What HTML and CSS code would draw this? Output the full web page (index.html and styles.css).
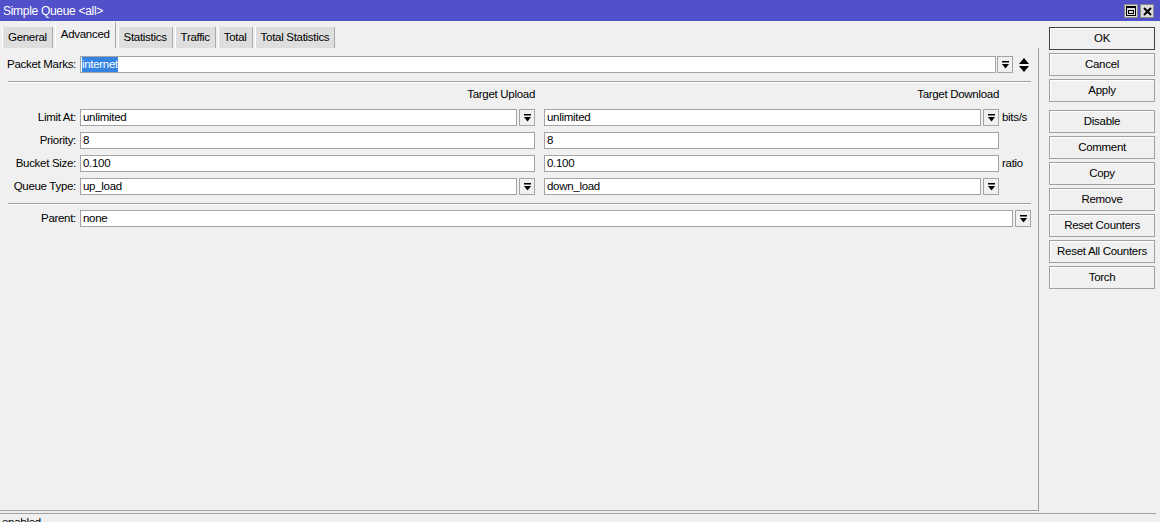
FILE: index.html
```html
<!DOCTYPE html>
<html lang="en">
<head>
    <meta charset="UTF-8">
    <title>Simple Queue &lt;all&gt;</title>
    <link rel="stylesheet" href="styles.css">
</head>
<body>
    <div class="titlebar">
        <span class="title">Simple Queue &lt;all&gt;</span>
        <div class="winbtns">
            <span class="wbtn">
                <svg width="10" height="10" viewBox="0 0 10 10"><rect x=".5" y=".5" width="9" height="9" fill="none" stroke="#000"/><rect x="0" y="0" width="10" height="2"/><rect x="2.5" y="4.5" width="5" height="3" fill="none" stroke="#000"/></svg>
            </span>
            <span class="wbtn">
                <svg width="9" height="9" viewBox="0 0 9 9"><path d="M1 1L8 8M8 1L1 8" stroke="#000" stroke-width="2"/></svg>
            </span>
        </div>
    </div>

    <div class="window">
        <div class="main">
            <div class="tabs">
                <div class="tab">General</div>
                <div class="tab active">Advanced</div>
                <div class="tab">Statistics</div>
                <div class="tab">Traffic</div>
                <div class="tab">Total</div>
                <div class="tab">Total Statistics</div>
            </div>

            <div class="panel">
                <div class="row">
                    <div class="lbl">Packet Marks:</div>
                    <div class="field marks"><span class="selected">internet</span></div>
                    <div class="dd"><svg width="7" height="8" viewBox="0 0 7 8"><rect width="7" height="1.5"/><path d="M0 3h7L3.5 7.5z"/></svg></div>
                    <div class="updown"><svg width="10" height="14" viewBox="0 0 10 14"><path d="M5 0L10 6H0z M0 8h10L5 14z"/></svg></div>
                </div>

                <div class="sep"></div>

                <div class="grid">
                    <div></div>
                    <div class="head">Target Upload</div>
                    <div class="head">Target Download</div>
                    <div></div>

                    <div class="lbl">Limit At:</div>
                    <div class="combo">
                        <div class="field">unlimited</div>
                        <div class="dd"><svg width="7" height="8" viewBox="0 0 7 8"><rect width="7" height="1.5"/><path d="M0 3h7L3.5 7.5z"/></svg></div>
                    </div>
                    <div class="combo">
                        <div class="field">unlimited</div>
                        <div class="dd"><svg width="7" height="8" viewBox="0 0 7 8"><rect width="7" height="1.5"/><path d="M0 3h7L3.5 7.5z"/></svg></div>
                    </div>
                    <div class="unit">bits/s</div>

                    <div class="lbl">Priority:</div>
                    <div class="combo"><div class="field">8</div></div>
                    <div class="combo"><div class="field">8</div></div>
                    <div></div>

                    <div class="lbl">Bucket Size:</div>
                    <div class="combo"><div class="field">0.100</div></div>
                    <div class="combo"><div class="field">0.100</div></div>
                    <div class="unit">ratio</div>

                    <div class="lbl">Queue Type:</div>
                    <div class="combo">
                        <div class="field">up_load</div>
                        <div class="dd"><svg width="7" height="8" viewBox="0 0 7 8"><rect width="7" height="1.5"/><path d="M0 3h7L3.5 7.5z"/></svg></div>
                    </div>
                    <div class="combo">
                        <div class="field">down_load</div>
                        <div class="dd"><svg width="7" height="8" viewBox="0 0 7 8"><rect width="7" height="1.5"/><path d="M0 3h7L3.5 7.5z"/></svg></div>
                    </div>
                    <div></div>
                </div>

                <div class="sep sep2"></div>

                <div class="row parent">
                    <div class="lbl">Parent:</div>
                    <div class="combo wide">
                        <div class="field">none</div>
                        <div class="dd"><svg width="7" height="8" viewBox="0 0 7 8"><rect width="7" height="1.5"/><path d="M0 3h7L3.5 7.5z"/></svg></div>
                    </div>
                </div>
            </div>
        </div>

        <div class="side">
            <div class="btn default">OK</div>
            <div class="btn">Cancel</div>
            <div class="btn">Apply</div>
            <div class="btn spaced">Disable</div>
            <div class="btn">Comment</div>
            <div class="btn">Copy</div>
            <div class="btn">Remove</div>
            <div class="btn">Reset Counters</div>
            <div class="btn">Reset All Counters</div>
            <div class="btn">Torch</div>
        </div>
    </div>

    <div class="status">enabled</div>
</body>
</html>
```

FILE: styles.css
```css
body {
    margin: 0;
    width: 1160px;
    height: 522px;
    overflow: hidden;
    background-color: #f0f0f0;
    color: #000;
    font-family: "Liberation Sans", Arial, sans-serif;
    font-size: 11.5px;
    letter-spacing: -0.3px;
}

.titlebar {
    height: 21px;
    background-color: #5151c9;
    color: #fff;
    display: flex;
    align-items: center;
    justify-content: space-between;
    padding: 0 6px 0 3px;
    font-size: 12px;
}

.winbtns {
    display: flex;
    gap: 2px;
    margin-top: 1px;
}

.wbtn {
    width: 14px;
    height: 14px;
    box-sizing: border-box;
    background-color: #dcdcdc;
    border: 1px solid #8a8a8a;
    display: flex;
    align-items: center;
    justify-content: center;
}

.window {
    display: flex;
    height: 490px;
}

.main {
    width: 1039px;
    display: flex;
    flex-direction: column;
}

/* tab strip */
.tabs {
    height: 27px;
    display: flex;
    align-items: flex-end;
    gap: 2px;
    padding-left: 2px;
}

.tab {
    height: 21px;
    line-height: 21px;
    padding: 0 5px;
    box-sizing: border-box;
    background-color: #dedede;
    border-left: 1px solid #fff;
    border-right: 1px solid #a8a8a8;
}

.tab.active {
    height: 26px;
    line-height: 25px;
    background-color: #f0f0f0;
}

.panel {
    flex: 1;
    border-right: 1px solid #a0a0a0;
    border-bottom: 1px solid #a0a0a0;
    padding-top: 8px;
}

.row {
    display: flex;
    align-items: center;
    height: 17px;
}

.lbl {
    width: 80px;
    padding-right: 4px;
    box-sizing: border-box;
    text-align: right;
    line-height: 17px;
    white-space: nowrap;
}

.field {
    height: 17px;
    line-height: 15px;
    box-sizing: border-box;
    background-color: #fff;
    border: 1px solid #a5a5a5;
    padding-left: 2px;
    white-space: nowrap;
    overflow: hidden;
}

.field.marks {
    width: 916px;
    padding-left: 1px;
}

.selected {
    display: inline-block;
    background-color: #3484e4;
    color: #fff;
    line-height: 15px;
}

.dd {
    width: 16px;
    height: 17px;
    margin-left: 2px;
    box-sizing: border-box;
    background-color: #f0f0f0;
    border: 1px solid #a5a5a5;
    display: flex;
    align-items: center;
    justify-content: center;
    flex-shrink: 0;
}

.row > .dd {
    margin-left: 1px;
}

.updown {
    margin-left: 6px;
    display: flex;
    align-items: center;
}

.sep {
    margin: 8px 8px 0 8px;
    width: 1023px;
    border-top: 1px solid #a0a0a0;
    border-bottom: 1px solid #fff;
}

.sep2 {
    margin-top: 8px;
}

.grid {
    display: grid;
    grid-template-columns: 80px 464px 458px 1fr;
    grid-auto-rows: 17px;
    row-gap: 6px;
    margin-top: 3px;
}

.head {
    width: 455px;
    text-align: right;
    line-height: 17px;
}

.combo {
    width: 455px;
    display: flex;
}

.combo .field {
    flex: 1;
}

.combo.wide {
    width: 951px;
}

.unit {
    line-height: 17px;
    white-space: nowrap;
}

.parent {
    margin-top: 5px;
}

/* button column */
.side {
    display: flex;
    flex-direction: column;
    gap: 3px;
    padding: 6px 0 0 10px;
}

.btn {
    width: 106px;
    height: 23px;
    line-height: 21px;
    box-sizing: border-box;
    text-align: center;
    background-color: #f0f0f0;
    border: 1px solid #a0a0a0;
    box-shadow: inset 1px 1px 0 #fff;
    white-space: nowrap;
}

.btn.default {
    border-color: #404040;
}

.btn.spaced {
    margin-top: 5px;
}

.status {
    margin: 2px 4px 0 0;
    border-top: 1px solid #a0a0a0;
    padding: 2px 0 0 2px;
    line-height: 13px;
}
```
